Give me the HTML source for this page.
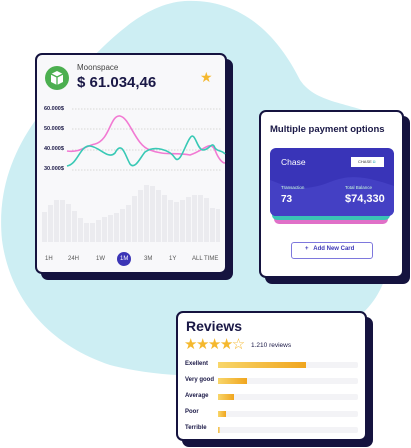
<!DOCTYPE html>
<html><head><meta charset="utf-8"><style>
*{margin:0;padding:0;box-sizing:border-box}
body{width:411px;height:448px;background:#fff;position:relative;overflow:hidden;font-family:"Liberation Sans",sans-serif;color:#1a1846}
.abs{position:absolute}
.card{position:absolute;background:#f8f8fa;border:2px solid #15133f;border-radius:7px;box-shadow:6px 6px 0 #15133f}
.t{position:absolute;white-space:nowrap}
</style></head><body>
<svg class="abs" style="left:0;top:0" width="411" height="448">
<path d="M185,1 C245,-2 280,40 300,80 C320,110 370,100 395,130 C420,170 400,250 380,290 C360,330 310,345 270,365 C230,380 160,378 110,365 C50,345 10,300 2,240 C-5,170 30,120 70,80 C105,45 140,4 185,1 Z" fill="#cdeef3"/>
</svg>

<div class="card" style="left:35px;top:53px;width:192px;height:221px"></div>
<svg class="abs" style="left:45px;top:66px" width="24" height="24" viewBox="0 0 24 24"><circle cx="12" cy="12" r="12" fill="#4caf50"/><path d="M6 8 L12 5 L18 8 L18 16 L12 19 L6 16Z" fill="#fff"/><path d="M6 8 L12 11 L18 8 M12 11 L12 19" stroke="#4caf50" stroke-width="1.3" fill="none"/></svg>
<div class="t" style="left:77px;top:63px;font-size:8px;color:#444">Moonspace</div>
<div class="t" style="left:77px;top:74px;font-size:15px;font-weight:bold">$ 61.034,46</div>
<div class="t" style="left:200px;top:69px;font-size:14px;color:#f5b82e">★</div>
<div class="t" style="left:44px;top:106px;font-size:5.5px;font-weight:bold">60.000$</div>
<div class="t" style="left:44px;top:126px;font-size:5.5px;font-weight:bold">50.000$</div>
<div class="t" style="left:44px;top:146px;font-size:5.5px;font-weight:bold">40.000$</div>
<div class="t" style="left:44px;top:166px;font-size:5.5px;font-weight:bold">30.000$</div>
<svg class="abs" style="left:0;top:0" width="411" height="448">
<g stroke="#ccc" stroke-dasharray="1.5 1.5" stroke-width="0.7"><line x1="72" y1="109" x2="221" y2="109"/><line x1="72" y1="129" x2="221" y2="129"/><line x1="72" y1="150" x2="221" y2="150"/><line x1="72" y1="170" x2="221" y2="170"/></g>
<g fill="#ebebef">
<rect x="42" y="212" width="5" height="30"/><rect x="48" y="205" width="5" height="37"/><rect x="54" y="200" width="5" height="42"/><rect x="60" y="200" width="5" height="42"/><rect x="66" y="204" width="5" height="38"/><rect x="72" y="211" width="5" height="31"/><rect x="78" y="218" width="5" height="24"/><rect x="84" y="223" width="5" height="19"/><rect x="90" y="223" width="5" height="19"/><rect x="96" y="220" width="5" height="22"/><rect x="102" y="217" width="5" height="25"/><rect x="108" y="215" width="5" height="27"/><rect x="114" y="213" width="5" height="29"/><rect x="120" y="209" width="5" height="33"/><rect x="126" y="205" width="5" height="37"/><rect x="132" y="196" width="5" height="46"/><rect x="138" y="190" width="5" height="52"/><rect x="144" y="185" width="5" height="57"/><rect x="150" y="186" width="5" height="56"/><rect x="156" y="190" width="5" height="52"/><rect x="162" y="195" width="5" height="47"/><rect x="168" y="200" width="5" height="42"/><rect x="174" y="202" width="5" height="40"/><rect x="180" y="200" width="5" height="42"/><rect x="186" y="197" width="5" height="45"/><rect x="192" y="195" width="5" height="47"/><rect x="198" y="195" width="5" height="47"/><rect x="204" y="198" width="5" height="44"/><rect x="210" y="208" width="5" height="34"/><rect x="216" y="209" width="4" height="33"/>
</g>
<path d="M67,151 C80,153 85,146 95,144 C110,140 110,115 120,116 C130,118 135,145 150,150 C165,156 175,152 190,155 C205,150 210,140 215,150 C218,158 222,163 225,163" stroke="#f27ad3" stroke-width="1.6" fill="none"/>
<path d="M67,166 C78,164 80,145 90,146 C100,147 108,160 115,153 C122,140 125,155 130,164 C135,170 140,158 145,152 C155,145 170,150 175,158 C180,165 185,145 190,138 C195,130 197,150 203,150 C210,150 212,140 215,148 C218,152 222,150 225,154" stroke="#38c9b5" stroke-width="1.6" fill="none"/>
<circle cx="124" cy="259" r="7" fill="#3b35b6"/>
</svg>
<div class="t" style="left:45px;top:256px;font-size:6px;color:#555">1H</div>
<div class="t" style="left:68px;top:256px;font-size:6px;color:#555">24H</div>
<div class="t" style="left:96px;top:256px;font-size:6px;color:#555">1W</div>
<div class="t" style="left:120px;top:256px;font-size:6px;color:#fff">1M</div>
<div class="t" style="left:144px;top:256px;font-size:6px;color:#555">3M</div>
<div class="t" style="left:169px;top:256px;font-size:6px;color:#555">1Y</div>
<div class="t" style="left:192px;top:256px;font-size:6px;color:#555">ALL TIME</div>

<div class="card" style="left:259px;top:110px;width:145px;height:168px;background:#fff"></div>
<div class="t" style="left:270px;top:124px;font-size:9.5px;font-weight:bold">Multiple payment options</div>
<div class="abs" style="left:274px;top:204px;width:114px;height:20px;background:#e070c8;border-radius:5px"></div>
<div class="abs" style="left:272px;top:202px;width:118px;height:18px;background:#3ac4b6;border-radius:5px"></div>
<div class="abs" style="left:270px;top:148px;width:124px;height:68px;background:#3934b8;border-radius:6px;overflow:hidden">
<svg class="abs" width="124" height="68"><path d="M0,32 C20,40 35,44 60,34 C80,26 95,28 124,38 L124,68 L0,68Z" fill="#4440c4"/></svg>
</div>
<div class="t" style="left:281px;top:157px;font-size:8.5px;color:#fff">Chase</div>
<div class="abs" style="left:351px;top:157px;width:33px;height:10px;background:#fff"></div>
<div class="t" style="left:358px;top:159px;font-size:4px;color:#333">CHASE <span style="color:#3ab">◘</span></div>
<div class="t" style="left:281px;top:185px;font-size:4.5px;color:#cfd">Transaction</div>
<div class="t" style="left:281px;top:194px;font-size:10px;font-weight:bold;color:#fff">73</div>
<div class="t" style="left:345px;top:185px;font-size:4.5px;color:#cfd">Total Balance</div>
<div class="t" style="left:345px;top:193px;font-size:11px;font-weight:bold;color:#fff">$74,330</div>
<div class="abs" style="left:291px;top:242px;width:82px;height:17px;border:1px solid #7e78dd;border-radius:3px"></div>
<div class="t" style="left:305px;top:246px;font-size:6px;font-weight:bold;color:#3b35b6">+&nbsp;&nbsp; Add New Card</div>

<div class="card" style="left:176px;top:311px;width:191px;height:130px;background:#fff"></div>
<div class="t" style="left:186px;top:318px;font-size:14px;font-weight:bold">Reviews</div>
<div class="t" style="left:184px;top:335px;font-size:15px;color:#f5b82e;letter-spacing:-1.5px">★★★★☆</div>
<div class="t" style="left:251px;top:342px;font-size:6.5px">1.210 reviews</div>
<svg class="abs" style="left:0;top:0" width="411" height="448">
<defs><linearGradient id="g" x1="0" x2="1"><stop offset="0" stop-color="#f8d66a"/><stop offset="1" stop-color="#f0a51e"/></linearGradient></defs>
<g fill="#f3f3f6"><rect x="218" y="362" width="140" height="6" rx="2"/><rect x="218" y="378" width="140" height="6" rx="2"/><rect x="218" y="394" width="140" height="6" rx="2"/><rect x="218" y="411" width="140" height="6" rx="2"/><rect x="218" y="427" width="140" height="6" rx="2"/></g>
<g fill="url(#g)"><rect x="218" y="362" width="88" height="6"/><rect x="218" y="378" width="29" height="6"/><rect x="218" y="394" width="16" height="6"/><rect x="218" y="411" width="8" height="6"/><rect x="218" y="427" width="1.5" height="6"/></g>
</svg>
<div class="t" style="left:185px;top:361px;font-size:6px;font-weight:bold">Exellent</div>
<div class="t" style="left:185px;top:377px;font-size:6px;font-weight:bold">Very good</div>
<div class="t" style="left:185px;top:393px;font-size:6px;font-weight:bold">Average</div>
<div class="t" style="left:185px;top:409px;font-size:6px;font-weight:bold">Poor</div>
<div class="t" style="left:185px;top:425px;font-size:6px;font-weight:bold">Terrible</div>
</body></html>
